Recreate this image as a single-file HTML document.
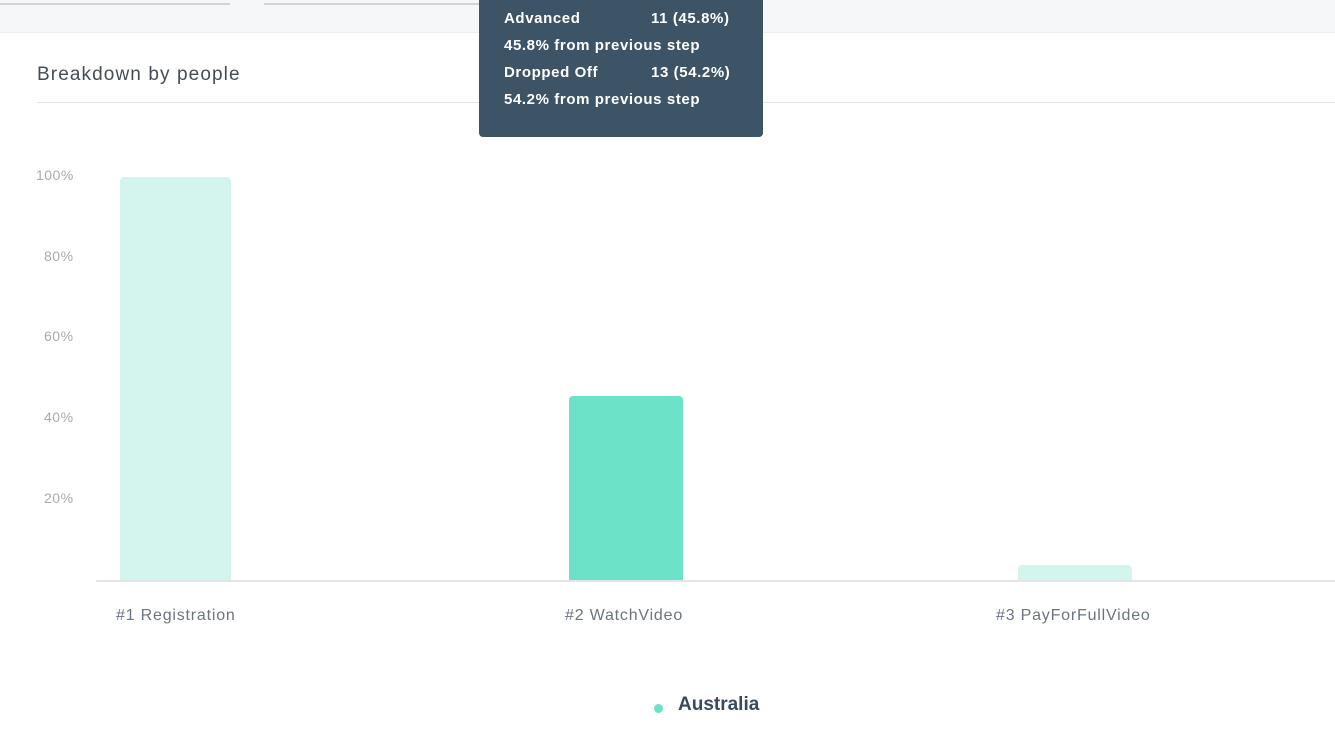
<!DOCTYPE html>
<html><head><meta charset="utf-8"><style>
*{margin:0;padding:0;box-sizing:border-box}
body{width:1335px;height:750px;background:#fff;position:relative;overflow:hidden;font-family:"Liberation Sans",sans-serif}
.a{position:absolute;white-space:nowrap}
.top{left:0;top:0;width:1335px;height:33px;background:#f6f7f8;border-bottom:1px solid #eceef0}
.ln{height:2px;background:#cdd4dc;top:3px}
.yl{color:#aaa;font-size:14px;letter-spacing:0.5px}
.xl{color:#6b7480;font-size:16px;letter-spacing:0.8px;top:607px}
.tt{left:479px;top:-4px;width:284px;height:141px;background:#3d5466;border-radius:4px;color:#fff;font-weight:bold;font-size:15px;letter-spacing:0.6px}
.tt div{position:absolute;white-space:nowrap}
</style></head><body>
<div class="a top"></div>
<div class="a ln" style="left:0;width:230px"></div>
<div class="a ln" style="left:264px;width:216px"></div>
<div class="a" style="left:37px;top:64px;font-size:19px;color:#444c55;letter-spacing:1.1px">Breakdown by people</div>
<div class="a" style="left:37px;top:102px;width:1298px;height:1px;background:#e2e4e6"></div>
<div class="a yl" style="left:36px;top:167px">100%</div>
<div class="a yl" style="left:44px;top:248px">80%</div>
<div class="a yl" style="left:44px;top:328px">60%</div>
<div class="a yl" style="left:44px;top:409px">40%</div>
<div class="a yl" style="left:44px;top:490px">20%</div>
<div class="a" style="left:120px;top:177px;width:111px;height:403px;background:#d3f5ee;border-radius:4px 4px 0 0"></div>
<div class="a" style="left:569px;top:396px;width:114px;height:184px;background:#6ce2c8;border-radius:4px 4px 0 0"></div>
<div class="a" style="left:1018px;top:565px;width:114px;height:15px;background:#d3f5ee;border-radius:4px 4px 0 0"></div>
<div class="a" style="left:96px;top:580px;width:1239px;height:2px;background:#e3e5e7"></div>
<div class="a xl" style="left:116px">#1 Registration</div>
<div class="a xl" style="left:565px">#2 WatchVideo</div>
<div class="a xl" style="left:996px">#3 PayForFullVideo</div>
<div class="a" style="left:654px;top:704px;width:9px;height:9px;border-radius:50%;background:#6ce2c8"></div>
<div class="a" style="left:678px;top:694px;font-size:19px;font-weight:bold;color:#3a4a5a;letter-spacing:0px">Australia</div>
<div class="a tt">
<div style="left:25px;top:14px">Advanced</div><div style="left:172px;top:14px">11 (45.8%)</div>
<div style="left:25px;top:41px">45.8% from previous step</div>
<div style="left:25px;top:68px">Dropped Off</div><div style="left:172px;top:68px">13 (54.2%)</div>
<div style="left:25px;top:95px">54.2% from previous step</div>
</div>
</body></html>
